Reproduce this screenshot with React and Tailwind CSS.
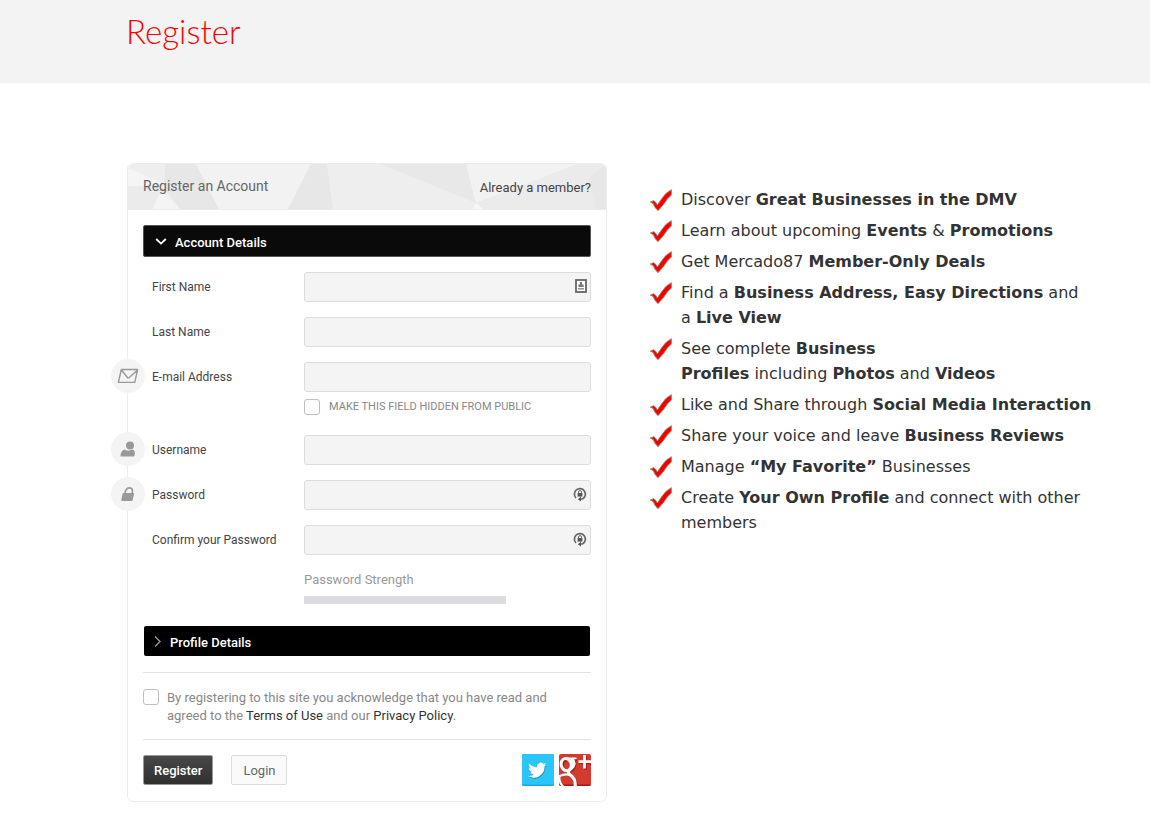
import { useState } from "react";

const benefits = [
  <>
    Discover <strong>Great Businesses in the DMV</strong>
  </>,
  <>
    Learn about upcoming <strong>Events</strong> &amp; <strong>Promotions</strong>
  </>,
  <>
    Get Mercado87 <strong>Member-Only Deals</strong>
  </>,
  <>
    Find a <strong>Business Address, Easy Directions</strong> and a&nbsp;
    <strong>Live View</strong>
  </>,
  <>
    See complete <strong>Business</strong>
    <br />
    <strong>Profiles</strong> including <strong>Photos</strong> and{" "}
    <strong>Videos</strong>
  </>,
  <>
    Like and Share through <strong>Social Media Interaction</strong>
  </>,
  <>
    Share your voice and leave <strong>Business Reviews</strong>
  </>,
  <>
    Manage <strong>“My Favorite”</strong> Businesses
  </>,
  <>
    Create <strong>Your Own Profile</strong> and connect with other members
  </>,
];

const CheckMark = () => (
  <svg viewBox="0 0 72 72" className="mt-px size-6 shrink-0" aria-hidden="true">
    <path
      d="M4 42 L14 38 L20 43 L25 51 L37 34 L50 17 L67 5 L67 21 L55 33 L43 50 L27 68 L18 58 L13 47 Z"
      fill="#f40000"
      stroke="#a3826a"
      strokeWidth="3"
      strokeLinejoin="round"
    />
  </svg>
);

const HeaderPattern = () => (
  <svg
    viewBox="0 0 478 45"
    preserveAspectRatio="none"
    className="absolute inset-0 size-full"
    aria-hidden="true"
  >
    <rect width="478" height="45" fill="#eeeeee" />
    <path d="M0 4 L38 21 L0 22 Z" fill="#f5f5f5" />
    <path d="M0 22 L33 24 L25 45 L0 45 Z" fill="#ebebeb" />
    <path d="M33 27 L52 45 L25 45 Z" fill="#f4f4f4" />
    <path d="M37 0 L68 0 L91 45 L52 45 L36 23 Z" fill="#e7e7e7" />
    <path d="M68 0 L183 0 L160 45 L91 45 Z" fill="#f2f2f2" />
    <path d="M183 0 L199 0 L205 45 L160 45 Z" fill="#e7e7e7" />
    <path d="M252 0 L338 0 L348 39 Z" fill="#e8e8e8" />
    <path d="M338 0 L450 0 L348 39 Z" fill="#f2f2f2" />
    <path d="M450 0 L478 0 L478 45 L355 45 L348 39 Z" fill="#ebebeb" />
    <path d="M460 15 L478 0 L478 45 L468 45 Z" fill="#e7e7e7" />
    <path d="M348 39 L355 45 L345 45 Z" fill="#f7f7f7" />
  </svg>
);

const MailIcon = () => (
  <svg viewBox="0 0 22 16" className="h-4 w-[22px]" fill="none" stroke="#999" strokeWidth="1.4" strokeLinejoin="round">
    <path d="M4.3 1.5 H20.6 L17.8 14.4 H1.4 Z M4.3 1.7 L10.6 9.8 Q11.2 10.4 12 9.8 L20.5 2.1" />
  </svg>
);

const UserIcon = () => (
  <svg viewBox="0 0 16 16" className="size-4" fill="#999">
    <ellipse cx="10" cy="4.6" rx="4" ry="4" />
    <path d="M0.4 15.4 C0.6 11.6 2 9.4 4.8 8.6 C6.5 10.2 10 10.2 11.6 8.6 C14.8 9 15.6 11 14.3 15 Q14.2 15.4 13.6 15.4 Z" />
  </svg>
);

const LockIcon = () => (
  <svg viewBox="0 0 16 16" className="size-4" fill="#999">
    <path d="M3.2 7 H13.6 Q14.3 7 14.1 7.8 L12.6 14.3 Q12.4 15 11.7 15 H1.9 Q1.1 15 1.3 14.3 L2.6 7.6 Q2.7 7 3.2 7 Z" />
    <path d="M5 7 C5.6 3.6 7.3 1.8 9.6 1.8 C12.2 1.8 12.9 3.8 12.2 7" fill="none" stroke="#999" strokeWidth="1.7" />
  </svg>
);

// autofill hint, shown inside the first name box
const ContactHint = () => (
  <svg viewBox="0 0 12 14" className="h-3.5 w-3">
    <rect x="1" y="1" width="10" height="12" fill="#fff" stroke="#666" strokeWidth="1.8" />
    <path d="M5 3 H7 V5.4 H8.6 V8 H3.4 V5.4 H5 Z" fill="#777" />
    <path d="M3 9.8 H9" stroke="#888" strokeWidth="1.4" />
  </svg>
);

// generate-password hint: lock in a circular arrow
const PasswordHint = () => (
  <svg viewBox="0 0 14 15" className="h-[15px] w-3.5" fill="none">
    <path d="M3 11 A5.5 5.5 0 1 1 9.8 11.8 L7 12.2" stroke="#666" strokeWidth="1.7" />
    <path d="M8 9.8 V14.6 L4.8 12.2 Z" fill="#555" />
    <rect x="4.6" y="6" width="4.8" height="3.6" fill="#555" />
    <path d="M5.5 6 V5.1 A1.5 1.5 0 0 1 8.5 5.1 V6" stroke="#666" />
  </svg>
);

const TwitterLogo = () => (
  <svg viewBox="0 0 32 32" className="size-8">
    <rect width="32" height="32" rx="1.5" fill="#1cabe0" />
    <rect width="32" height="30.5" rx="1.5" fill="#2bc5f9" />
    <g transform="translate(6.5 7) scale(0.76)">
      <path
        d="M23.6 4.6a9.7 9.7 0 0 1-2.8.8 4.9 4.9 0 0 0 2.1-2.7 9.9 9.9 0 0 1-3.1 1.2 4.9 4.9 0 0 0-8.4 4.5A14 14 0 0 1 1.3 3.2a4.9 4.9 0 0 0 1.5 6.6 4.9 4.9 0 0 1-2.2-.6 4.9 4.9 0 0 0 3.9 4.9 4.9 4.9 0 0 1-2.2.1 4.9 4.9 0 0 0 4.6 3.4A9.9 9.9 0 0 1-.4 19.6a14 14 0 0 0 21.5-12.4 10 10 0 0 0 2.5-2.6z"
        fill="#1795c6"
        transform="translate(0.8 1.5)"
      />
      <path
        d="M23.6 4.6a9.7 9.7 0 0 1-2.8.8 4.9 4.9 0 0 0 2.1-2.7 9.9 9.9 0 0 1-3.1 1.2 4.9 4.9 0 0 0-8.4 4.5A14 14 0 0 1 1.3 3.2a4.9 4.9 0 0 0 1.5 6.6 4.9 4.9 0 0 1-2.2-.6 4.9 4.9 0 0 0 3.9 4.9 4.9 4.9 0 0 1-2.2.1 4.9 4.9 0 0 0 4.6 3.4A9.9 9.9 0 0 1-.4 19.6a14 14 0 0 0 21.5-12.4 10 10 0 0 0 2.5-2.6z"
        fill="#fff"
      />
    </g>
  </svg>
);

const GooglePlusLogo = () => (
  <svg viewBox="0 0 32 32" className="size-8 rounded-[2px]" fill="none">
    <rect width="32" height="32" fill="#d33b2d" />
    <rect y="30.5" width="32" height="1.5" fill="#a51b12" />
    <g stroke="#a8221a" strokeWidth="3" transform="translate(1 1.2)">
      <ellipse cx="7.2" cy="10.6" rx="4.8" ry="6" />
      <path d="M8 4.6 H17 M12.5 5 C16.4 8 15.4 12.4 12 14.8 C8.6 17.2 8.4 18.4 11.4 21 C15.4 24.2 17 27 16 33" />
      <path d="M25.5 1 V14.6 M19.5 7.6 H32" />
    </g>
    <g stroke="#fff">
      <ellipse cx="7.2" cy="10.6" rx="5" ry="6.2" strokeWidth="3" transform="rotate(-14 7.2 10.6)" />
      <path d="M6 4.4 H17.6" strokeWidth="1.6" />
      <path
        d="M12.5 4.8 C16.4 8 15.4 12.4 12 14.8 C8.6 17.2 8.4 18.4 11.4 21 C15.4 24.2 17 27 16 33"
        strokeWidth="3.2"
      />
      <path d="M0 22.4 C4 20.2 8 20 11.4 21.2 M0.4 23 C0 27 1.4 30 4.6 33" strokeWidth="2.2" />
      <path d="M25.5 1 V14.6 M19.5 7.6 H32" strokeWidth="2.8" />
    </g>
  </svg>
);

const Field = ({ id, label, type = "text", icon, hint }) => (
  <div className="relative flex items-center">
    {icon && (
      <span className="absolute -top-[3px] -left-8 flex size-[34px] items-center justify-center rounded-full bg-[#f4f4f4]">
        {icon}
      </span>
    )}
    <label htmlFor={id} className="w-[161px] shrink-0 pl-[9px] text-[12px] text-[#444]">
      {label}
    </label>
    <div className="relative min-w-0 flex-1">
      <input
        id={id}
        type={type}
        className="block h-[30px] w-full rounded-[3px] border border-[#dcdcdc] bg-[#f4f4f4] px-2 text-[12px] text-[#444] outline-none focus:border-gray-400"
      />
      {hint && <span className="pointer-events-none absolute top-[7px] right-1">{hint}</span>}
    </div>
  </div>
);

const CheckBox = ({ id }) => (
  <input
    id={id}
    type="checkbox"
    className="size-4 shrink-0 appearance-none rounded-[3px] border border-[#bfbfbf] bg-white checked:bg-gray-600"
  />
);

const RegisterForm = () => {
  const [profileOpen, setProfileOpen] = useState(false);

  return (
    <form
      onSubmit={(e) => e.preventDefault()}
      className="w-full max-w-[480px] rounded-md border border-[#ececec] bg-white font-[Roboto,sans-serif] lg:w-[480px] lg:shrink-0"
    >
      {/* HEADER */}
      <div className="relative h-[46px] overflow-hidden rounded-t-md border-b border-[#ececec]">
        <HeaderPattern />
        <div className="relative flex h-full items-center justify-between px-[15px]">
          <h2 className="text-[14px] text-[#666]">Register an Account</h2>
          <a href="#login" className="pt-0.5 text-[13px] text-[#444]">
            Already a member?
          </a>
        </div>
      </div>

      <div className="p-[15px]">
        {/* ACCOUNT DETAILS */}
        <button
          type="button"
          className="flex h-8 w-full items-center gap-2 rounded-[2px] border border-[#555] bg-[#0a0a0a] px-[11px] text-[13px] font-medium text-white"
        >
          <svg viewBox="0 0 12 12" className="size-3" fill="none" stroke="#fff" strokeWidth="1.8">
            <path d="M1.2 4 L6 8.6 L10.8 4" />
          </svg>
          <span className="pt-[3px]">Account Details</span>
        </button>

        <div className="mt-[15px] space-y-[15px]">
          <Field id="first" label="First Name" hint={<ContactHint />} />
          <Field id="last" label="Last Name" />
          <div>
            <Field id="email" label="E-mail Address" type="email" icon={<MailIcon />} />
            <div className="mt-[7px] mb-5 flex items-center gap-[9px] pl-[161px]">
              <CheckBox id="hide-email" />
              <label htmlFor="hide-email" className="text-[11px] leading-4 text-[#888] uppercase">
                Make this field hidden from public
              </label>
            </div>
          </div>
          <Field id="username" label="Username" icon={<UserIcon />} />
          <Field id="password" label="Password" type="password" icon={<LockIcon />} hint={<PasswordHint />} />
          <Field id="confirm" label="Confirm your Password" type="password" hint={<PasswordHint />} />
          <div className="pt-px pl-[161px] text-[13px] leading-[18px] text-[#999]">
            Password Strength
            <div className="mt-[7px] h-2 w-[202px] max-w-full bg-[#dcdcdf]" />
          </div>
        </div>

        {/* PROFILE DETAILS */}
        <div className="mt-[22px] px-px">
          <button
            type="button"
            aria-expanded={profileOpen}
            onClick={() => setProfileOpen(!profileOpen)}
            className="flex h-[30px] w-full items-center gap-2 rounded-[2px] bg-black px-[6px] text-[13px] font-medium text-white"
          >
            <svg viewBox="0 0 12 12" className="size-3" fill="none" stroke="#999" strokeWidth="1.4">
              <path d="M5 1.4 L10 6.4 L5 11.4" />
            </svg>
            <span className="pt-[3px]">Profile Details</span>
          </button>
        </div>

        {/* TERMS */}
        <div className="mt-4 flex gap-2 border-y border-[#e3e3e3] pt-4 pr-5 pb-[14px]">
          <CheckBox id="terms" />
          <label htmlFor="terms" className="text-[13px] leading-[18px] text-[#888]">
            By registering to this site you acknowledge that you have read and agreed to the{" "}
            <a href="#terms" className="text-[#333]">
              Terms of Use
            </a>{" "}
            and our{" "}
            <a href="#privacy" className="text-[#333]">
              Privacy Policy
            </a>
            .
          </label>
        </div>

        {/* ACTIONS */}
        <div className="mt-[14px] flex items-center">
          <button
            type="submit"
            className="h-[30px] rounded-[2px] border border-[#999] bg-linear-to-b from-[#484848] to-[#303030] px-[10px] pt-0.5 text-[13px] font-medium text-white"
          >
            Register
          </button>
          <button
            type="button"
            className="ml-[18px] h-[30px] rounded-[2px] border border-[#dcdcdc] bg-[#fafafa] px-[11px] pt-0.5 text-[13px] text-[#666]"
          >
            Login
          </button>
          <div className="ml-auto flex gap-[5px]">
            <a href="#twitter" aria-label="Twitter">
              <TwitterLogo />
            </a>
            <a href="#google" aria-label="Google Plus">
              <GooglePlusLogo />
            </a>
          </div>
        </div>
      </div>
    </form>
  );
};

const App = () => {
  return (
    <div className="min-h-screen bg-white">
      <header className="bg-[#f3f3f3] px-8 pt-[14px] pb-[34px] lg:pl-[126px]">
        <h1 className="font-[Lato,sans-serif] text-[33px] leading-[35px] font-light text-[#ff0000]">
          Register
        </h1>
      </header>

      <main className="flex flex-col gap-[42px] px-8 py-20 lg:flex-row lg:pr-12 lg:pb-5 lg:pl-[127px]">
        <RegisterForm />
        <ul className="min-w-0 flex-1 space-y-[6px] pt-6 font-['DejaVu_Sans',Verdana,sans-serif] text-[16px] leading-[25px] text-[#333]">
          {benefits.map((text, index) => (
            <li key={index} className="flex gap-2">
              <CheckMark />
              <span>{text}</span>
            </li>
          ))}
        </ul>
      </main>
    </div>
  );
};

export default App;
